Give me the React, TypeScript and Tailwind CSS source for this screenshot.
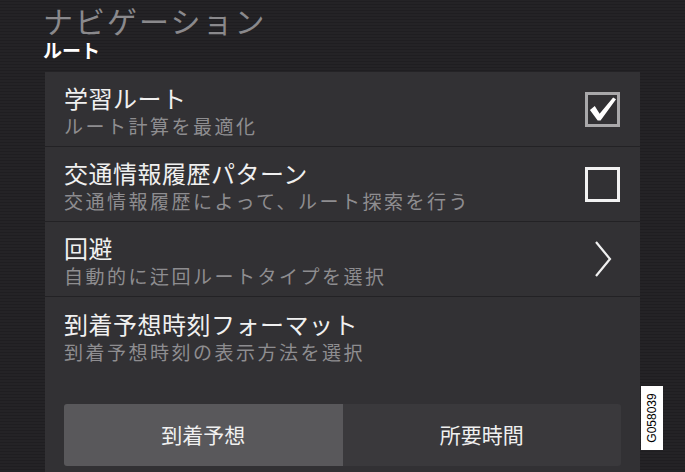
import React from "react";

const font = { fontFamily: '"Noto Sans CJK JP", "Noto Sans", sans-serif' };

function Row({ title, sub, right, last }: { title: string; sub: string; right?: React.ReactNode; last?: boolean }) {
  return (
    <div className={`flex items-center h-[75px] pl-[19px] pr-[20px] ${last ? "" : "border-b border-[#232225]"}`}>
      <div className="flex-1 flex flex-col pt-[2px]">
        <div className="text-[24px] leading-[31px] text-[#f0f0f0] tracking-[0.5px]">{title}</div>
        <div className="text-[19px] leading-[25px] text-[#8e8d90] tracking-[2.5px]">{sub}</div>
      </div>
      {right}
    </div>
  );
}

export default function App() {
  return (
    <div
      className="w-[685px] h-[472px] overflow-hidden relative bg-[#222124] flex flex-col"
      style={{
        ...font,
        backgroundImage: "repeating-linear-gradient(0deg, #242326 0px, #242326 2px, #1f1e21 2px, #1f1e21 3px)",
      }}
    >
      <div className="h-[72px] pl-[43px] pt-[2px] flex flex-col">
        <div className="text-[30px] leading-[36px] text-[#8a898c] tracking-[2px]">ナビゲーション</div>
        <div className="text-[19px] leading-[24px] font-bold text-white">ルート</div>
      </div>
      <div className="ml-[45px] w-[595px] flex-1 bg-[#323134] flex flex-col">
        <Row
          title="学習ルート"
          sub="ルート計算を最適化"
          right={
            <div className="w-[35px] h-[35px] border-[3px] border-[#a9a8aa] flex items-center justify-center">
              <svg width="30" height="28" viewBox="0 0 30 28">
                <path d="M2 15 L7 11 L12 19 L26 2 L29 4 L13 26 L10 26 Z" fill="#ffffff" />
              </svg>
            </div>
          }
        />
        <Row
          title="交通情報履歴パターン"
          sub="交通情報履歴によって、ルート探索を行う"
          right={<div className="w-[35px] h-[35px] border-[3px] border-[#f2f2f2]" />}
        />
        <Row
          title="回避"
          sub="自動的に迂回ルートタイプを選択"
          right={
            <div className="w-[35px] flex justify-center">
              <svg width="18" height="38" viewBox="0 0 18 38">
                <path d="M2 2 L16 19 L2 36" stroke="#f0f0f0" strokeWidth="2.2" fill="none" />
              </svg>
            </div>
          }
        />
        <Row title="到着予想時刻フォーマット" sub="到着予想時刻の表示方法を選択" last />
        <div className="flex mx-[19px] mt-[32px] h-[62px] rounded-[3px] overflow-hidden">
          <div className="flex-1 bg-[#59585b] flex items-center justify-center text-[21px] text-[#f0f0f0]">到着予想</div>
          <div className="flex-1 bg-[#3a393c] flex items-center justify-center text-[21px] text-[#f0f0f0]">所要時間</div>
        </div>
      </div>
      <div className="absolute left-[641px] top-[386px] w-[22px] h-[64px] bg-white flex items-center justify-center">
        <div
          className="text-[12px] text-black -rotate-90 whitespace-nowrap"
          style={{ fontFamily: '"Liberation Sans", Arial, sans-serif' }}
        >
          G058039
        </div>
      </div>
    </div>
  );
}
